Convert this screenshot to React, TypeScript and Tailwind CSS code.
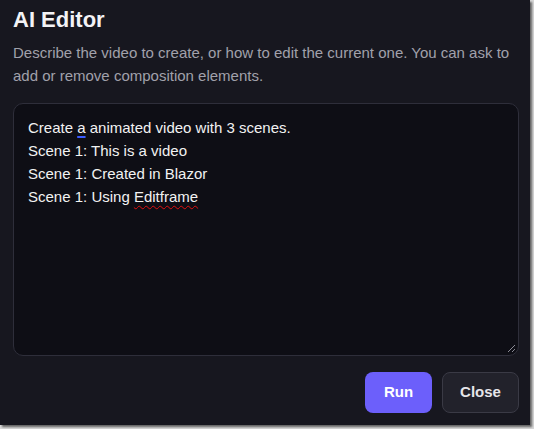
import { ReactNode } from "react";

const prompt: ReactNode[] = [
	<>
		Create{" "}
		<span className="underline decoration-[#3b5bff] decoration-2 underline-offset-[3px]">a</span>{" "}
		animated video with 3 scenes.
	</>,
	<>Scene 1: This is a video</>,
	<>Scene 1: Created in Blazor</>,
	<>
		Scene 1: Using{" "}
		<span className="underline decoration-wavy decoration-[#e01010] decoration-1 underline-offset-[3px]">
			Editframe
		</span>
	</>,
];

const ResizeGrip = () => (
	<svg
		className="absolute bottom-[2px] right-[2px]"
		width="9"
		height="9"
		viewBox="0 0 9 9"
		fill="none"
	>
		<path d="M8 1L1 8M8 5L5 8" stroke="#8a8a94" strokeWidth="1" />
	</svg>
);

export default function App() {
	return (
		<div className="h-[429px] w-[534px] bg-[#d8d8d8] font-['Liberation_Sans',Arial,sans-serif]">
			<div className="flex h-[425px] w-[530px] flex-col bg-[#17171f] pb-[11px] pl-[13px] pr-[11px] pt-[6px] shadow-[2px_2px_2px_rgba(0,0,0,0.55)]">
				<h2 className="text-[22px] font-bold leading-[28px] text-[#f3f3f6]">AI Editor</h2>
				<p className="mt-[8px] text-[15px] leading-[22.5px] text-[#a1a1ab]">
					Describe the video to create, or how to edit the current one. You can ask to add or
					remove composition elements.
				</p>
				<div className="relative mt-[16px] h-[253px] rounded-[10px] border border-[#2e2e3a] bg-[#0e0e15] px-[14px] pt-[12px] text-[15px] leading-[23px] text-[#f2f2f2]">
					{prompt.map((line, idx) => (
						<div key={`line_${idx}`}>{line}</div>
					))}
					<ResizeGrip />
				</div>
				<div className="mt-[16px] flex justify-end gap-[10px]">
					<button className="h-[41px] w-[67px] rounded-[8px] bg-[#6c5ffb] text-[15px] font-bold text-white">
						Run
					</button>
					<button className="h-[41px] w-[77px] rounded-[8px] border border-[#3a3a45] bg-[#22222b] text-[15px] font-bold text-[#e6e6ea]">
						Close
					</button>
				</div>
			</div>
		</div>
	);
}
